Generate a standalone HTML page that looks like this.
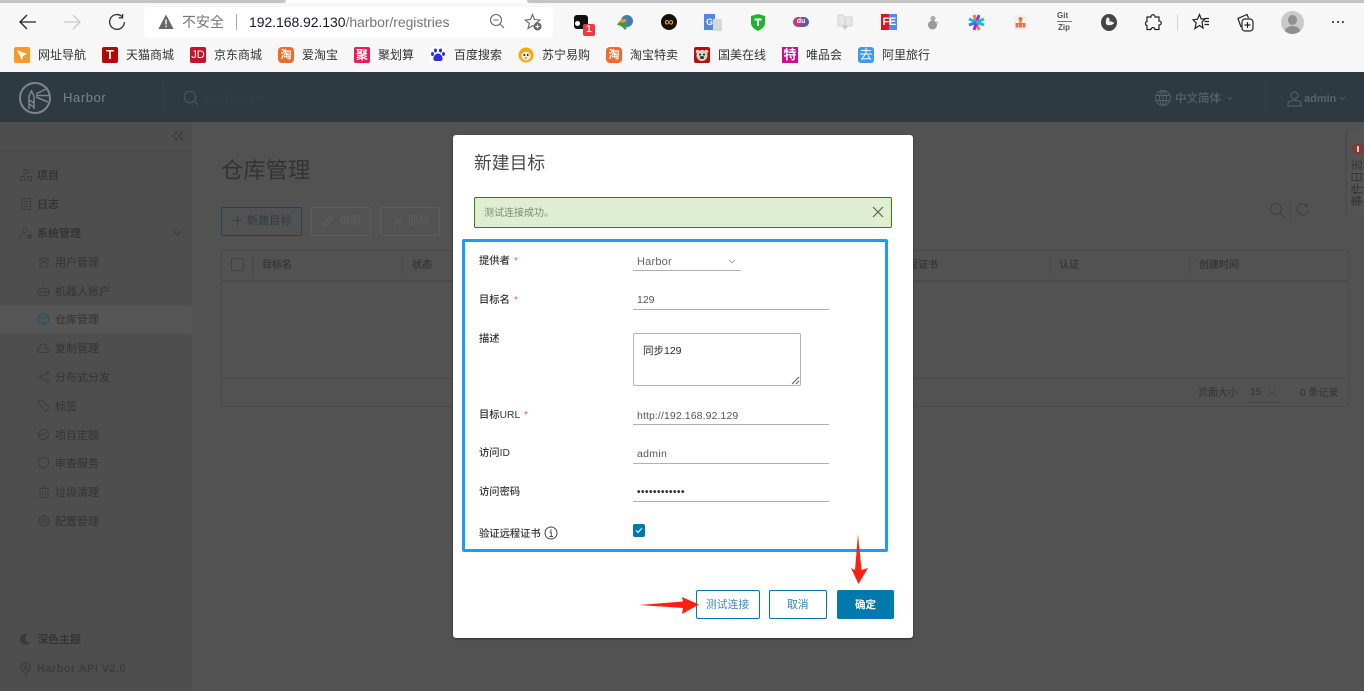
<!DOCTYPE html>
<html lang="zh">
<head>
<meta charset="utf-8">
<title>Harbor</title>
<style>
html,body{margin:0;padding:0;width:1364px;height:691px;overflow:hidden;background:#525252}
body{position:relative;font-family:"Liberation Sans","Noto Sans CJK SC",sans-serif;font-size:11px;color:#222}
div,span,svg{position:absolute;box-sizing:border-box}
.t{white-space:nowrap;line-height:16px}
.bm{color:#333;font-size:12px;top:47px}
.bi{top:47px;width:16px;height:16px;border-radius:2px;color:#fff;text-align:center;font-weight:bold;font-size:11px;line-height:16px;white-space:nowrap}
.nav{color:#333;font-size:11px}
.navb{color:#303030;font-size:11px;font-weight:500}
.ic{fill:none;stroke:#3d3d3d;stroke-width:1}
.th{color:#333;font-size:10px;font-weight:500;top:258px}
.sep{background:#474747;width:1px}
.lab{color:#333;font-size:10.3px;left:479px;font-weight:500}
.val{color:#555;font-size:10.5px;left:637px}
.ul{background:#b0b0b0;height:1px;left:633px;width:196px}
.red{color:#e8614c;font-size:10px}
</style>
</head>
<body>
<!-- browser chrome -->
<div style="left:0;top:0;width:1364px;height:74px;background:#f7f7f7"></div>
<div style="left:0;top:0;width:286px;height:3px;background:#c4c4c4;border-radius:0 0 3px 0"></div>
<div style="left:527px;top:0;width:837px;height:3px;background:#c4c4c4;border-radius:0 0 0 3px"></div>
<div style="left:286px;top:0;width:241px;height:3px;background:#fff"></div>
<div style="left:0;top:72px;width:1364px;height:2px;background:#2b3a40"></div>

<svg style="left:18px;top:12px" width="20" height="20" viewBox="0 0 20 20" fill="none" stroke="#222" stroke-width="1.3"><path d="M2 10H18M9 3L2 10L9 17"/></svg>
<svg style="left:62px;top:12px" width="20" height="20" viewBox="0 0 20 20" fill="none" stroke="#c8c8c8" stroke-width="1.3"><path d="M2 10H18M11 3L18 10L11 17"/></svg>
<svg style="left:107px;top:12px" width="20" height="20" viewBox="0 0 20 20" fill="none" stroke="#333" stroke-width="1.3"><path d="M15 4.500A7.400 7.400 0 1 0 17.400 10M15.600 2V5.800H11.800"/></svg>

<div style="left:144px;top:7px;width:409px;height:31px;background:#fff;border-radius:5px"></div>
<svg style="left:158px;top:14px" width="16" height="16" viewBox="0 0 16 16"><path d="M8 .5L15.600 15H.4Z" fill="#666"/><path d="M8 5.500V10.500M8 11.600V13.200" stroke="#fff" stroke-width="1.400"/></svg>
<span class="t" style="left:182px;top:14px;font-size:14px;color:#777">不安全</span>
<div style="left:236px;top:14px;width:1px;height:16px;background:#aaa"></div>
<span class="t" style="left:249px;top:14px;font-size:14px;color:#1a1a2e;letter-spacing:-.06px">192.168.92.130<span style="position:static;color:#757575">/harbor/registries</span></span>
<svg style="left:489px;top:13px" width="17" height="17" viewBox="0 0 17 17" fill="none" stroke="#666" stroke-width="1.100"><circle cx="7" cy="7" r="5.500"/><path d="M4.500 7H9.500M11 11L15 15"/></svg>
<svg style="left:524px;top:13px" width="19" height="19" viewBox="0 0 19 19"><path d="M8.500 1.500L10.500 6.500L15.800 7L11.700 10.400L13 15.500L8.500 12.700L4 15.500L5.300 10.400L1.200 7L6.500 6.500Z" fill="none" stroke="#666" stroke-width="1.100"/><circle cx="13.500" cy="13.500" r="4" fill="#666"/><path d="M11.500 13.500H15.500M13.500 11.500V15.500" stroke="#fff"/></svg>

<!-- extensions -->
<div style="left:574px;top:15px;width:14px;height:14px;background:#111;border-radius:3px"></div>
<div style="left:575px;top:21px;width:5px;height:5px;background:#fff;border-radius:50%"></div>
<div style="left:583px;top:24px;width:12px;height:12px;background:#ef3a42;border-radius:2px;color:#fff;font-size:10px;font-weight:bold;text-align:center;line-height:12px">1</div>
<svg style="left:616px;top:14px" width="18" height="17" viewBox="0 0 18 17"><circle cx="11" cy="7" r="6" fill="#3f7fb0"/><path d="M1 11C3 5 8 4 11 6L8 9Z" fill="#e0a030"/><path d="M1 11C3 8 6 8 8 9L10 14L16 8L9 16C6 12 3 11 1 11Z" fill="#3f9a3a"/></svg>
<div style="left:661px;top:14px;width:16px;height:16px;background:#15110b;border-radius:50%"></div>
<span class="t" style="left:661px;top:14px;width:16px;text-align:center;color:#e0a030;font-size:13px;font-weight:bold;line-height:15px">∞</span>
<div style="left:704px;top:14px;width:11px;height:16px;background:#4d87e8"></div>
<div style="left:713px;top:19px;width:9px;height:12px;background:#d4d8e0"></div>
<span class="t" style="left:704px;top:14px;width:11px;text-align:center;color:#fff;font-size:9px;font-weight:bold">G</span>
<svg style="left:750px;top:14px" width="16" height="17" viewBox="0 0 16 17"><path d="M1 2L8 0L15 2V9C15 13 11 15.500 8 17C5 15.500 1 13 1 9Z" fill="#1db52f"/><path d="M4.500 4.500H11.500V6.500H9V12H7V6.500H4.500Z" fill="#fff"/></svg>
<div style="left:793px;top:17px;width:16px;height:10px;background:linear-gradient(90deg,#e0306c,#3a62b8);border-radius:5px"></div>
<span class="t" style="left:793px;top:14px;width:16px;text-align:center;color:#fff;font-size:7px;font-weight:bold">du</span>
<svg style="left:837px;top:14px" width="16" height="17" viewBox="0 0 16 17"><path d="M1 1H6L7.500 3H15V12H1Z" fill="#e8e8e8" stroke="#d0d0d0"/><path d="M8 5V12M5.500 12H10.500L8 15Z" fill="#c8c8c8" stroke="#c8c8c8"/></svg>
<div style="left:881px;top:14px;width:8px;height:16px;background:#e8101c"></div>
<div style="left:889px;top:14px;width:8px;height:16px;background:#4d8cf0"></div>
<span class="t" style="left:881px;top:14px;width:16px;text-align:center;color:#fff;font-size:11px;font-weight:bold;letter-spacing:-.5px">FE</span>
<svg style="left:927px;top:15px" width="12" height="15" viewBox="0 0 12 15"><circle cx="6" cy="3.500" r="2.500" fill="#aaa"/><ellipse cx="5.500" cy="10" rx="4.500" ry="4.500" fill="#999"/><path d="M9 6L12 8L9 9Z" fill="#bbb"/></svg>
<svg style="left:968px;top:14px" width="17" height="17" viewBox="0 0 17 17" fill="none" stroke-width="3"><path d="M6 1L11 16" stroke="#f27a3a"/><path d="M11 1L6 16" stroke="#a72cf0"/><path d="M1 5L16 11" stroke="#1fb4e8"/><path d="M1 11L8 8.500" stroke="#2f78f0"/><path d="M16 5L9 8" stroke="#19c8b0"/></svg>
<div style="left:1014px;top:15px;width:13px;height:15px;background:#f3f0ee"></div>
<svg style="left:1014px;top:15px" width="13" height="15" viewBox="0 0 13 15" fill="#e8744c"><circle cx="6.500" cy="4" r="2"/><rect x="5.500" y="5.500" width="2" height="5"/><rect x="1.500" y="8" width="10" height="1.300"/><rect x="1.500" y="9" width="3" height="3.500"/><rect x="5" y="9" width="3" height="3.500"/><rect x="8.500" y="9" width="3" height="3.500"/></svg>
<span class="t" style="left:1057px;top:11px;font-size:8px;font-weight:bold;color:#555;line-height:9px">Git</span>
<div style="left:1057px;top:21px;width:15px;height:1px;background:#777"></div>
<span class="t" style="left:1058px;top:23px;font-size:8px;font-weight:bold;color:#555;line-height:9px">Zip</span>
<svg style="left:1101px;top:14px" width="16" height="17" viewBox="0 0 16 17"><ellipse cx="8" cy="8.500" rx="8" ry="8.500" fill="#454545"/><path d="M6 3.500C9 3 9 6 8 7.500C10 7 13 8 13 9.500C10 12 6 11.500 5 10C4.500 7.500 5 5 6 3.500Z" fill="#f2f2f2"/></svg>
<svg style="left:1144px;top:13px" width="18" height="19" viewBox="0 0 18 19" fill="none" stroke="#222" stroke-width="1.200"><path d="M7 4C7 1 11 1 11 4H15V8C18 8 18 12 15 12V16.500H11C11 14 7 14 7 16.500H3V12.500C1 12.500 1 8.500 3 8.500V4Z"/></svg>
<div style="left:1177px;top:14px;width:1px;height:17px;background:#d4d4d4"></div>
<svg style="left:1192px;top:13px" width="18" height="18" viewBox="0 0 18 18" fill="none" stroke="#222" stroke-width="1.200"><path d="M7.500 1.500L9.200 6H13L10 9L11 15L7.500 12.500L3 15.500L4.200 10L1 6.800L5.500 6.200ZM12.500 8.500H17M12.500 11.500H17M12.500 5.500H17"/></svg>
<svg style="left:1236px;top:13px" width="18" height="19" viewBox="0 0 18 19" fill="none" stroke="#222" stroke-width="1.200"><path d="M5 14L2 5.500L11 1.500L12.500 5"/><rect x="6" y="6" width="11" height="12" rx="3"/><path d="M11.500 9V15M8.500 12H14.500"/></svg>
<div style="left:1281px;top:11px;width:23px;height:23px;background:#c9c9c9;border-radius:50%;overflow:hidden">
  <div style="left:7px;top:4px;width:9px;height:10px;background:#8f8f8f;border-radius:50%"></div>
  <div style="left:4px;top:15px;width:15px;height:10px;background:#8f8f8f;border-radius:50%"></div>
</div>
<div style="left:1332px;top:21px;width:2px;height:2px;background:#222;border-radius:50%"></div>
<div style="left:1337px;top:21px;width:2px;height:2px;background:#222;border-radius:50%"></div>
<div style="left:1342px;top:21px;width:2px;height:2px;background:#222;border-radius:50%"></div>

<!-- bookmarks -->
<div class="bi" style="left:14px;background:#f79a2b"></div>
<svg style="left:14px;top:47px" width="16" height="16" viewBox="0 0 16 16"><path d="M3 3L13 7L9 9L8 13Z" fill="#fff"/></svg>
<span class="t bm" style="left:38px">网址导航</span>
<div class="bi" style="left:102px;background:#b80505;font-size:13px">T</div>
<span class="t bm" style="left:126px">天猫商城</span>
<div class="bi" style="left:190px;background:#c2152c;font-weight:normal;font-size:11px">JD</div>
<span class="t bm" style="left:214px">京东商城</span>
<div class="bi" style="left:278px;background:#f4682c;font-size:11px;border-radius:4px">淘</div>
<span class="t bm" style="left:302px">爱淘宝</span>
<div class="bi" style="left:354px;background:#e81c50;font-size:12px">聚</div>
<span class="t bm" style="left:378px">聚划算</span>
<div class="bi" style="left:430px;background:#fff"></div>
<svg style="left:430px;top:47px" width="16" height="16" viewBox="0 0 16 16" fill="#2a32d8"><ellipse cx="5.500" cy="3.500" rx="1.500" ry="2"/><ellipse cx="10.500" cy="3.500" rx="1.500" ry="2"/><ellipse cx="2.500" cy="7" rx="1.500" ry="2"/><ellipse cx="13.500" cy="7" rx="1.500" ry="2"/><path d="M8 6.500C5 6.500 3 10 3.500 12.500C4 14.500 6 14 8 14C10 14 12 14.500 12.500 12.500C13 10 11 6.500 8 6.500Z"/></svg>
<span class="t bm" style="left:454px">百度搜索</span>
<svg style="left:518px;top:47px" width="16" height="16" viewBox="0 0 16 16"><circle cx="8" cy="8" r="7.500" fill="#f9a712"/><circle cx="8" cy="9" r="4.500" fill="#fff3d8"/><circle cx="6.300" cy="8" r="1" fill="#222"/><circle cx="9.700" cy="8" r="1" fill="#222"/><path d="M6.500 10.500H9.500L8 12Z" fill="#a05020"/></svg>
<span class="t bm" style="left:542px">苏宁易购</span>
<div class="bi" style="left:606px;background:#f4682c;font-size:11px;border-radius:4px">淘</div>
<span class="t bm" style="left:630px">淘宝特卖</span>
<div class="bi" style="left:694px;background:#b3100e"></div>
<svg style="left:694px;top:47px" width="16" height="16" viewBox="0 0 16 16"><circle cx="3.500" cy="4.500" r="1.800" fill="#d8d2c6"/><circle cx="12.500" cy="4.500" r="1.800" fill="#d8d2c6"/><ellipse cx="8" cy="8.500" rx="5.500" ry="5.500" fill="#d8d2c6"/><circle cx="6" cy="7.500" r="1" fill="#222"/><circle cx="10" cy="7.500" r="1" fill="#222"/><ellipse cx="8" cy="10.500" rx="2" ry="1.500" fill="#333"/></svg>
<span class="t bm" style="left:718px">国美在线</span>
<div class="bi" style="left:782px;background:#cc0e8c;font-size:13px;border-radius:0">特</div>
<span class="t bm" style="left:806px">唯品会</span>
<div class="bi" style="left:858px;background:#3c9bf0;font-weight:normal;font-size:13px;border-radius:3px">去</div>
<span class="t bm" style="left:882px">阿里旅行</span>

<!-- app header -->
<div style="left:0;top:74px;width:1364px;height:48px;background:#2d3a41"></div>
<svg style="left:19px;top:82px" width="32" height="32" viewBox="0 0 32 32" fill="none" stroke="#7f8588"><circle cx="16" cy="16" r="15" stroke-width="2"/><path d="M10 27V14L12.500 9L15 14V27M10 18L15 21M10 22L15 25" stroke-width="1.500"/><path d="M17 12L29 6M17 13.500H31M17 15L29 20" stroke-width="1.500"/></svg>
<span class="t" style="left:63px;top:90px;font-size:13px;color:#7c8285;letter-spacing:.6px">Harbor</span>
<svg style="left:183px;top:90px" width="16" height="16" viewBox="0 0 16 16" fill="none" stroke="#4f5a60"><circle cx="7" cy="7" r="5.800"/><path d="M11 11L15 15"/></svg>
<div style="left:163px;top:84px;width:1px;height:28px;background:#33414a"></div>
<span class="t" style="left:200px;top:91px;font-size:11px;color:#323f46">搜索 Harbor</span>
<svg style="left:1155px;top:90px" width="16" height="16" viewBox="0 0 16 16" fill="none" stroke="#59636a" stroke-width=".9"><circle cx="8" cy="8" r="7.500"/><ellipse cx="8" cy="8" rx="3.500" ry="7.500"/><path d="M8 .5V15.500M1 5.500H15M1 10.500H15"/></svg>
<span class="t" style="left:1175px;top:91px;font-size:11.500px;font-weight:500;color:#59636a">中文简体</span>
<svg style="left:1226px;top:96px" width="7" height="5" viewBox="0 0 7 5" fill="none" stroke="#4c575e"><path d="M1 1L3.500 3.500L6 1"/></svg>
<div style="left:1265px;top:82px;width:1px;height:32px;background:#33414a"></div>
<svg style="left:1287px;top:91px" width="15" height="16" viewBox="0 0 15 16" fill="none" stroke="#59636a"><circle cx="7.500" cy="4.500" r="3.500"/><path d="M1 15V12.500C1 10.500 3 9.500 7.500 9.500C12 9.500 14 10.500 14 12.500V15Z"/></svg>
<span class="t" style="left:1304px;top:91px;font-size:11px;font-weight:bold;color:#59636a">admin</span>
<svg style="left:1339px;top:96px" width="7" height="5" viewBox="0 0 7 5" fill="none" stroke="#4c575e"><path d="M1 1L3.500 3.500L6 1"/></svg>

<!-- sidebar -->
<div style="left:0;top:122px;width:192px;height:569px;background:#4e4e4e"></div>
<div style="left:0;top:151px;width:192px;height:1px;background:#494949"></div>
<svg style="left:172px;top:130px" width="12" height="12" viewBox="0 0 12 12" fill="none" stroke="#333" stroke-width="1"><path d="M5.500 1.500L1 6L5.500 10.500M11 1.500L6.500 6L11 10.500"/></svg>
<div style="left:0;top:305px;width:192px;height:29px;background:#565656;border-radius:0 4px 4px 0"></div>

<svg class="ic" style="left:20px;top:169px" width="12" height="12" viewBox="0 0 12 12"><rect x="4" y=".5" width="4" height="4"/><rect x=".5" y="7.500" width="4" height="4"/><rect x="7.500" y="7.500" width="4" height="4"/></svg>
<span class="t navb" style="left:37px;top:168px">项目</span>
<svg class="ic" style="left:21px;top:198px" width="10" height="12" viewBox="0 0 10 12"><rect x=".5" y=".5" width="9" height="11"/><path d="M2.500 3.500H7.500M2.500 6H7.500M2.500 8.500H7.500"/></svg>
<span class="t navb" style="left:37px;top:197px">日志</span>
<svg class="ic" style="left:20px;top:227px" width="12" height="12" viewBox="0 0 12 12"><circle cx="5" cy="3" r="2.500"/><path d="M.5 11.500V9C.5 7.500 2.500 7 5 7"/><circle cx="9.500" cy="9.500" r="1.800" stroke-width="1.500"/></svg>
<span class="t navb" style="left:37px;top:226px">系统管理</span>
<svg style="left:172px;top:229px" width="11" height="8" viewBox="0 0 11 8" fill="none" stroke="#3d3d3d"><path d="M1 1.500L5.500 6L10 1.500"/></svg>

<svg class="ic" style="left:38px;top:256px" width="12" height="12" viewBox="0 0 12 12"><circle cx="6" cy="4" r="2"/><circle cx="2" cy="3" r="1.300"/><circle cx="10" cy="3" r="1.300"/><path d="M2.500 11C1 9 2 6.500 6 6.500C10 6.500 11 9 9.500 11Z"/></svg>
<span class="t nav" style="left:55px;top:255px">用户管理</span>
<svg class="ic" style="left:37px;top:285px" width="13" height="12" viewBox="0 0 13 12"><rect x="1.500" y="3.500" width="10" height="7" rx="2"/><path d="M6.500 3.500V1M.5 6V8M12.500 6V8"/><circle cx="4.500" cy="7" r=".8"/><circle cx="8.500" cy="7" r=".8"/></svg>
<span class="t nav" style="left:55px;top:284px">机器人账户</span>
<svg style="left:38px;top:313px" width="11" height="12" viewBox="0 0 11 12" fill="none" stroke="#28505f"><path d="M5.500 .5L10.500 3V9L5.500 11.500L.5 9V3ZM.5 3L5.500 5.500L10.500 3M5.500 5.500V11.500"/></svg>
<span class="t nav" style="left:55px;top:312px">仓库管理</span>
<svg class="ic" style="left:37px;top:342px" width="13" height="12" viewBox="0 0 13 12"><path d="M3 10.500C1 10.500.5 9 .5 8C.5 6.500 2 6 2.500 6C3 3 5 2 6.500 2C8.500 2 9.500 3 10 4.500M3 10.500H10C11.500 10.500 12.500 9 12.500 7.500M7 6.500H11M9.500 5V8"/></svg>
<span class="t nav" style="left:55px;top:341px">复制管理</span>
<svg class="ic" style="left:38px;top:371px" width="12" height="12" viewBox="0 0 12 12"><circle cx="2" cy="6" r="1.500"/><circle cx="10" cy="2" r="1.500"/><circle cx="10" cy="10" r="1.500"/><path d="M3.300 5.300L8.700 2.700M3.300 6.700L8.700 9.300"/></svg>
<span class="t nav" style="left:55px;top:370px">分布式分发</span>
<svg class="ic" style="left:38px;top:400px" width="12" height="12" viewBox="0 0 12 12"><path d="M.5 3V.5H4L11.500 7.500L7.500 11.500Z"/></svg>
<span class="t nav" style="left:55px;top:399px">标签</span>
<svg class="ic" style="left:38px;top:429px" width="11" height="11" viewBox="0 0 11 11"><circle cx="5.500" cy="5.500" r="5"/><path d="M1 7L3.500 5L5.500 6L8 3"/></svg>
<span class="t nav" style="left:55px;top:428px">项目定额</span>
<svg class="ic" style="left:38px;top:457px" width="11" height="12" viewBox="0 0 11 12"><path d="M5.500 .5L10.500 2V6C10.500 9 8 10.500 5.500 11.500C3 10.500 .5 9 .5 6V2Z"/></svg>
<span class="t nav" style="left:55px;top:456px">审查服务</span>
<svg class="ic" style="left:39px;top:486px" width="10" height="12" viewBox="0 0 10 12"><path d="M0 2.500H10M3 2.500V.5H7V2.500M1 2.500V11.500H9V2.500M3.500 4.500V9.500M6.500 4.500V9.500"/></svg>
<span class="t nav" style="left:55px;top:485px">垃圾清理</span>
<svg class="ic" style="left:38px;top:515px" width="12" height="12" viewBox="0 0 12 12"><circle cx="6" cy="6" r="2"/><path d="M5 .5H7L7.300 2.200L8.800 1.500L10.300 3L9.600 4.500L11.500 5V7L9.800 7.300L10.500 8.800L9 10.300L7.500 9.600L7 11.500H5L4.700 9.800L3.200 10.500L1.700 9L2.400 7.500L.5 7V5L2.200 4.700L1.500 3.200L3 1.700L4.500 2.400Z"/></svg>
<span class="t nav" style="left:55px;top:514px">配置管理</span>

<svg style="left:20px;top:633px" width="11" height="12" viewBox="0 0 11 12"><path d="M7 .5C2 .5 0 3.500 0 6C0 9.500 3 11.500 6 11.500C8 11.500 10 10.500 10.500 9.500C6 10.500 3.500 5.500 7 .5Z" fill="#3a3a3a"/></svg>
<span class="t navb" style="left:37px;top:632px">深色主题</span>
<svg class="ic" style="left:20px;top:662px" width="11" height="13" viewBox="0 0 11 13"><circle cx="5.500" cy="5.500" r="5"/><path d="M1 3L5.500 5.500L10 3M5.500 .5V5.500L2 9.500M5.500 5.500L9 9.500M3 12.500H8"/></svg>
<span class="t" style="left:37px;top:661px;font-size:11px;font-weight:bold;color:#3c3c3c;letter-spacing:.42px">Harbor API V2.0</span>

<!-- content -->
<span class="t" style="left:221px;top:156px;font-size:22.300px;line-height:30px;color:#333">仓库管理</span>
<div style="left:221px;top:207px;width:81px;height:29px;border:1px solid #1f4458;border-radius:2px"></div>
<svg style="left:232px;top:215px" width="11" height="11" viewBox="0 0 11 11" stroke="#2a4251" fill="none"><path d="M5.500 1V10M1 5.500H10"/></svg>
<span class="t" style="left:247px;top:213px;font-size:11px;color:#2f3b42;letter-spacing:.2px">新建目标</span>
<div style="left:311px;top:207px;width:60px;height:29px;border:1px solid #5d5d5d;border-radius:2px"></div>
<svg style="left:322px;top:215px" width="12" height="12" viewBox="0 0 12 12" stroke="#5f5f5f" fill="none"><path d="M1 11L2 7.500L8.500 1L11 3.500L4.500 10Z"/></svg>
<span class="t" style="left:339px;top:213px;font-size:11px;color:#5f5f5f">编辑</span>
<div style="left:380px;top:207px;width:60px;height:29px;border:1px solid #5d5d5d;border-radius:2px"></div>
<svg style="left:393px;top:216px" width="10" height="10" viewBox="0 0 10 10" stroke="#5f5f5f" fill="none"><path d="M1 1L9 9M9 1L1 9"/></svg>
<span class="t" style="left:408px;top:213px;font-size:11px;color:#5f5f5f">删除</span>

<svg style="left:1270px;top:203px" width="15" height="15" viewBox="0 0 15 15" fill="none" stroke="#3d3d3d"><circle cx="6" cy="6" r="5.500"/><path d="M10 10L14.500 14.500"/></svg>
<div style="left:1290px;top:201px;width:1px;height:18px;background:#474747"></div>
<svg style="left:1296px;top:203px" width="13" height="14" viewBox="0 0 13 14" fill="none" stroke="#3d3d3d"><path d="M11 2.800A5.500 5.500 0 1 0 12.200 7M11.500 0.500V3.500H8.500"/></svg>

<!-- table -->
<div style="left:221px;top:250px;width:1128px;height:157px;border:1px solid #494949;border-radius:2px"></div>
<div style="left:222px;top:280px;width:1126px;height:2px;background:#4a4a4a"></div>
<div style="left:222px;top:378px;width:1126px;height:1px;background:#494949"></div>
<div style="left:231px;top:258px;width:13px;height:13px;border:1px solid #404040;border-radius:2px"></div>
<div class="sep" style="left:252px;top:256px;height:19px"></div>
<div class="sep" style="left:401px;top:256px;height:19px"></div>
<div class="sep" style="left:1049px;top:256px;height:19px"></div>
<div class="sep" style="left:1189px;top:256px;height:19px"></div>
<span class="t th" style="left:262px">目标名</span>
<span class="t th" style="left:412px">状态</span>
<span class="t th" style="left:898px">远程证书</span>
<span class="t th" style="left:1059px">认证</span>
<span class="t th" style="left:1199px">创建时间</span>
<span class="t" style="left:1198px;top:386px;font-size:10px;color:#333">页面大小</span>
<span class="t" style="left:1250px;top:385px;font-size:10px;color:#333">15</span>
<svg style="left:1268px;top:390px" width="8" height="5" viewBox="0 0 8 5" fill="none" stroke="#444"><path d="M1 1L4 4L7 1"/></svg>
<div style="left:1246px;top:402px;width:35px;height:1px;background:#444"></div>
<span class="t" style="left:1300px;top:386px;font-size:10px;color:#333">0 条记录</span>

<!-- event log tab -->
<div style="left:1347px;top:130px;width:17px;height:85px;background:#545454;border-radius:2px 0 0 2px;box-shadow:-1px 0 1px #4a4a4a"></div>
<div style="left:1352px;top:143px;width:12px;height:12px;background:#7c3b33;border-radius:50%"></div>
<div style="left:1357px;top:146px;width:2px;height:6px;background:#d0c8c8"></div>
<span class="t" style="left:1351px;top:159px;height:48px;width:13px;font-size:12px;line-height:13px;color:#333;writing-mode:vertical-rl;text-orientation:sideways;transform:rotate(180deg)">事件日志</span>

<!-- modal -->
<div style="left:453px;top:135px;width:460px;height:503px;background:#fff;border-radius:3px;box-shadow:0 1px 2px rgba(0,0,0,.4)"></div>
<span class="t" style="left:474px;top:152px;font-size:17.800px;line-height:22px;color:#4a4a4a">新建目标</span>
<div style="left:474px;top:197px;width:418px;height:31px;background:#dfeed0;border:1px solid #3c7a0a;border-radius:2px"></div>
<span class="t" style="left:484px;top:206px;font-size:10px;line-height:16px;color:#7a8a76">测试连接成功。</span>
<svg style="left:872px;top:206px" width="12" height="12" viewBox="0 0 12 12" stroke="#555" fill="none"><path d="M1 1L11 11M11 1L1 11"/></svg>

<div style="left:462px;top:239px;width:426px;height:313px;border:3px solid #1e9bf7;border-radius:2px"></div>

<span class="t lab" style="top:254px">提供者</span><span class="t red" style="left:514px;top:254px">*</span>
<span class="t val" style="top:254px;color:#666;font-size:11px;letter-spacing:.2px">Harbor</span>
<svg style="left:728px;top:259px" width="8" height="5" viewBox="0 0 8 5" fill="none" stroke="#aaa"><path d="M1 1L4 4L7 1"/></svg>
<div class="ul" style="width:108px;top:270px"></div>

<span class="t lab" style="top:293px">目标名</span><span class="t red" style="left:514px;top:293px">*</span>
<span class="t val" style="top:292px">129</span>
<div class="ul" style="top:309px"></div>

<span class="t lab" style="top:332px">描述</span>
<div style="left:633px;top:333px;width:168px;height:53px;border:1px solid #b4b4b4;border-radius:2px"></div>
<span class="t" style="left:643px;top:343px;font-size:10.500px;color:#2a2a2a">同步129</span>
<svg style="left:791px;top:376px" width="9" height="9" viewBox="0 0 9 9" stroke="#555" fill="none"><path d="M1 8L8 1M5 8L8 5"/></svg>

<span class="t lab" style="top:408px">目标URL</span><span class="t red" style="left:524px;top:408px">*</span>
<span class="t val" style="top:408px;letter-spacing:.1px">http://192.168.92.129</span>
<div class="ul" style="top:424px"></div>

<span class="t lab" style="top:446px">访问ID</span>
<span class="t val" style="top:446px;letter-spacing:.3px">admin</span>
<div class="ul" style="top:463px"></div>

<span class="t lab" style="top:485px">访问密码</span>
<span class="t" style="left:637px;top:485px;font-size:10px;color:#333;font-weight:bold;letter-spacing:.5px">••••••••••••</span>
<div class="ul" style="top:501px"></div>

<span class="t lab" style="top:527px">验证远程证书</span>
<svg style="left:544px;top:526px" width="14" height="14" viewBox="0 0 14 14" fill="none" stroke="#444"><circle cx="7" cy="7" r="6"/><path d="M5.500 6H7.200V10.500M5.500 10.500H9M7 3.200V4.800"/></svg>
<div style="left:633px;top:524px;width:12px;height:13px;background:#0079ad;border-radius:2px"></div>
<svg style="left:635px;top:527px" width="8" height="7" viewBox="0 0 8 7" fill="none" stroke="#fff"><path d="M1 3.500L3 5.500L7 1"/></svg>

<div style="left:696px;top:590px;width:64px;height:29px;border:1px solid #0079ad;border-radius:2px"></div>
<span class="t" style="left:706px;top:597px;font-size:10.800px;color:#3a8db4">测试连接</span>
<div style="left:769px;top:590px;width:58px;height:29px;border:1px solid #0079ad;border-radius:2px"></div>
<span class="t" style="left:787px;top:597px;font-size:10.800px;color:#2b86ae">取消</span>
<div style="left:837px;top:590px;width:57px;height:29px;background:#0079ad;border-radius:2px"></div>
<span class="t" style="left:855px;top:597px;font-size:10.500px;font-weight:bold;color:#fff">确定</span>

<!-- arrows -->
<svg style="left:0;top:0" width="1364" height="691" viewBox="0 0 1364 691" fill="#fb2112"><path d="M639 605L683 601.500L682 597L699 604.500L682 614L683 608Z"/><path d="M858 534L861.500 570L868 568L858.500 584L851 568L855 570Z"/></svg>
</body>
</html>
